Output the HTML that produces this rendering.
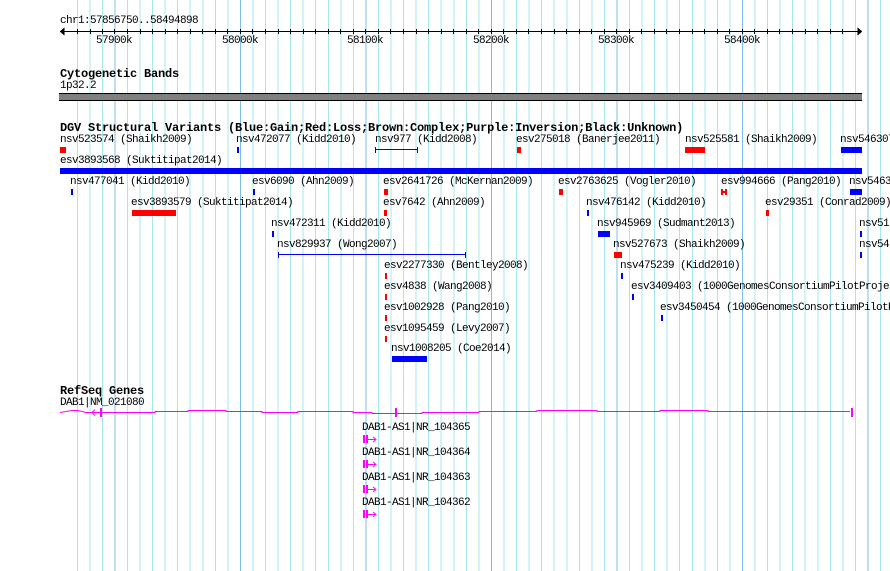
<!DOCTYPE html>
<html><head><meta charset="utf-8"><style>
html,body{margin:0;padding:0;}
body{width:890px;height:571px;position:relative;overflow:hidden;background:#fff;font-family:"Liberation Mono","DejaVu Sans Mono",monospace;}
.grid{position:absolute;left:70px;top:0;width:820px;height:571px;
background-image:repeating-linear-gradient(90deg,transparent 0,transparent 44.3px,#7fbfe4 44.3px,#7fbfe4 45.3px,transparent 45.3px,transparent 125.5px),
repeating-linear-gradient(90deg,transparent 0,transparent 6.8px,#a9e7ef 6.8px,#a9e7ef 7.8px,transparent 7.8px,transparent 12.55px);}
.t{position:absolute;font-size:11px;letter-spacing:-0.6px;line-height:10px;color:#000;white-space:pre;}
.b{position:absolute;font-size:12px;letter-spacing:-0.2px;line-height:12px;font-weight:bold;white-space:pre;}
.r{position:absolute;background:#f00;}
.u{position:absolute;background:#00f;}
.k{position:absolute;background:#000;}
</style></head><body>
<div class="grid"></div>

<div class="t" style="left:60px;top:16px">chr1:57856750..58494898</div>
<div class="k" style="left:61px;top:31px;width:800px;height:1px"></div>
<svg style="position:absolute;left:0;top:0" width="890" height="60">
<g stroke="#000" stroke-width="1">
<path d="M64.5 28 L60.5 31.5 L64.5 35 M857.5 28 L861.5 31.5 L857.5 35"/>
</g>
<g stroke="#000">
<path d="M77.5 29v5M90.5 29v5M102.5 29v5M114.5 29v5M127.5 29v5M140.5 29v5M152.5 29v5M165.5 29v5M177.5 29v5M190.5 29v5M202.5 29v5M215.5 29v5M227.5 29v5M240.5 29v5M252.5 29v5M265.5 29v5M278.5 29v5M290.5 29v5M303.5 29v5M315.5 29v5M328.5 29v5M340.5 29v5M353.5 29v5M365.5 29v5M378.5 29v5M390.5 29v5M403.5 29v5M416.5 29v5M428.5 29v5M441.5 29v5M453.5 29v5M466.5 29v5M478.5 29v5M491.5 29v5M503.5 29v5M516.5 29v5M528.5 29v5M541.5 29v5M554.5 29v5M566.5 29v5M579.5 29v5M591.5 29v5M604.5 29v5M616.5 29v5M629.5 29v5M641.5 29v5M654.5 29v5M666.5 29v5M679.5 29v5M692.5 29v5M704.5 29v5M717.5 29v5M729.5 29v5M742.5 29v5M754.5 29v5M767.5 29v5M779.5 29v5M792.5 29v5M805.5 29v5M817.5 29v5M830.5 29v5M842.5 29v5"/>
</g>
</svg>
<div class="t" style="left:96px;top:36px">57900k</div>
<div class="t" style="left:222px;top:36px">58000k</div>
<div class="t" style="left:347px;top:36px">58100k</div>
<div class="t" style="left:473px;top:36px">58200k</div>
<div class="t" style="left:598px;top:36px">58300k</div>
<div class="t" style="left:724px;top:36px">58400k</div>

<div class="b" style="left:60px;top:68px">Cytogenetic Bands</div>
<div class="t" style="left:60px;top:81px">1p32.2</div>
<div class="k" style="left:59px;top:93px;width:803px;height:8px"></div>
<div style="position:absolute;left:59px;top:94px;width:803px;height:6px;background:#808080"></div>

<div class="b" style="left:60px;top:122px">DGV Structural Variants (Blue:Gain;Red:Loss;Brown:Complex;Purple:Inversion;Black:Unknown)</div>

<div class="t" style="left:60px;top:135px">nsv523574 (Shaikh2009)</div>
<div class="t" style="left:236px;top:135px">nsv472077 (Kidd2010)</div>
<div class="t" style="left:375px;top:135px">nsv977 (Kidd2008)</div>
<div class="t" style="left:516px;top:135px">esv275018 (Banerjee2011)</div>
<div class="t" style="left:685px;top:135px">nsv525581 (Shaikh2009)</div>
<div class="t" style="left:840px;top:135px">nsv546307</div>
<div class="r" style="left:60px;top:147px;width:6px;height:6px"></div>
<div class="u" style="left:237px;top:147px;width:2px;height:6px"></div>
<div class="u" style="left:376px;top:149px;width:42px;height:1px"></div>
<div class="u" style="left:375px;top:147px;width:1px;height:6px"></div>
<div class="u" style="left:417px;top:147px;width:1px;height:6px"></div>
<div class="r" style="left:517px;top:147px;width:4px;height:6px"></div>
<div class="r" style="left:685px;top:147px;width:20px;height:6px"></div>
<div class="u" style="left:841px;top:147px;width:21px;height:6px"></div>

<div class="t" style="left:60px;top:156px">esv3893568 (Suktitipat2014)</div>
<div class="u" style="left:60px;top:168px;width:802px;height:6px"></div>

<div class="t" style="left:70px;top:177px">nsv477041 (Kidd2010)</div>
<div class="t" style="left:252px;top:177px">esv6090 (Ahn2009)</div>
<div class="t" style="left:383px;top:177px">esv2641726 (McKernan2009)</div>
<div class="t" style="left:558px;top:177px">esv2763625 (Vogler2010)</div>
<div class="t" style="left:721px;top:177px">esv994666 (Pang2010)</div>
<div class="t" style="left:849px;top:177px">nsv5463</div>
<div class="u" style="left:71px;top:189px;width:2px;height:6px"></div>
<div class="u" style="left:253px;top:189px;width:2px;height:6px"></div>
<div class="r" style="left:384px;top:189px;width:4px;height:6px"></div>
<div class="r" style="left:559px;top:189px;width:4px;height:6px"></div>
<div class="r" style="left:721px;top:189px;width:2px;height:6px"></div>
<div class="r" style="left:725px;top:189px;width:2px;height:6px"></div>
<div class="r" style="left:721px;top:191px;width:6px;height:2px"></div>
<div class="u" style="left:850px;top:189px;width:12px;height:6px"></div>

<div class="t" style="left:131px;top:198px">esv3893579 (Suktitipat2014)</div>
<div class="t" style="left:383px;top:198px">esv7642 (Ahn2009)</div>
<div class="t" style="left:586px;top:198px">nsv476142 (Kidd2010)</div>
<div class="t" style="left:765px;top:198px">esv29351 (Conrad2009)</div>
<div class="r" style="left:132px;top:210px;width:44px;height:6px"></div>
<div class="r" style="left:384px;top:210px;width:3px;height:6px"></div>
<div class="u" style="left:587px;top:210px;width:2px;height:6px"></div>
<div class="r" style="left:766px;top:210px;width:3px;height:6px"></div>

<div class="t" style="left:271px;top:219px">nsv472311 (Kidd2010)</div>
<div class="t" style="left:597px;top:219px">nsv945969 (Sudmant2013)</div>
<div class="t" style="left:859px;top:219px">nsv51</div>
<div class="u" style="left:272px;top:231px;width:2px;height:6px"></div>
<div class="u" style="left:598px;top:231px;width:12px;height:6px"></div>
<div class="u" style="left:860px;top:231px;width:2px;height:6px"></div>

<div class="t" style="left:277px;top:240px">nsv829937 (Wong2007)</div>
<div class="t" style="left:613px;top:240px">nsv527673 (Shaikh2009)</div>
<div class="t" style="left:859px;top:240px">nsv54</div>
<div class="u" style="left:278px;top:254px;width:188px;height:1px"></div>
<div class="u" style="left:278px;top:252px;width:1px;height:6px"></div>
<div class="u" style="left:465px;top:252px;width:1px;height:6px"></div>
<div class="r" style="left:614px;top:252px;width:8px;height:6px"></div>
<div class="u" style="left:860px;top:252px;width:2px;height:6px"></div>

<div class="t" style="left:384px;top:261px">esv2277330 (Bentley2008)</div>
<div class="t" style="left:620px;top:261px">nsv475239 (Kidd2010)</div>
<div class="r" style="left:385px;top:273px;width:2px;height:6px"></div>
<div class="u" style="left:621px;top:273px;width:2px;height:6px"></div>

<div class="t" style="left:384px;top:282px">esv4838 (Wang2008)</div>
<div class="t" style="left:631px;top:282px">esv3409403 (1000GenomesConsortiumPilotProje</div>
<div class="r" style="left:385px;top:294px;width:2px;height:6px"></div>
<div class="u" style="left:632px;top:294px;width:2px;height:6px"></div>

<div class="t" style="left:384px;top:303px">esv1002928 (Pang2010)</div>
<div class="t" style="left:660px;top:303px">esv3450454 (1000GenomesConsortiumPilotP</div>
<div class="r" style="left:385px;top:315px;width:2px;height:6px"></div>
<div class="u" style="left:661px;top:315px;width:2px;height:6px"></div>

<div class="t" style="left:384px;top:324px">esv1095459 (Levy2007)</div>
<div class="r" style="left:385px;top:336px;width:2px;height:6px"></div>

<div class="t" style="left:391px;top:344px">nsv1008205 (Coe2014)</div>
<div class="u" style="left:392px;top:356px;width:35px;height:6px"></div>

<div class="b" style="left:60px;top:385px">RefSeq Genes</div>
<div class="t" style="left:60px;top:398px">DAB1|NM_021080</div>
<svg style="position:absolute;left:0;top:400px" width="890" height="30">
<g stroke="#f0f" fill="none" stroke-width="1">
<path d="M60 12.5 L72 10.5 L78 10.5 L86 12.5 L155 12.5 L155 11.5 L188 11.5 L188 10.5 L226 10.5 L226 11.5 L262 11.5 L262 12.5 L298 12.5 L298 11.5 L353 11.5 L353 12.5 L372 12.5 L372 13.5 L422 13.5 L422 12.5 L479 12.5 L479 11.5 L537 11.5 L537 10.5 L597 10.5 L597 11.5 L660 11.5 L660 10.5 L708 10.5 L708 11.5 L850 11.5"/>
<path d="M95 9.5 L92 12.5 L95 15.5"/>
</g>
<rect x="100" y="8" width="2" height="9" fill="#f0f"/>
<rect x="395" y="8" width="2" height="9" fill="#f0f"/>
<rect x="851" y="8" width="2" height="9" fill="#f0f"/>
</svg>

<div class="t" style="left:362px;top:423px">DAB1-AS1|NR_104365</div>
<div class="t" style="left:362px;top:448px">DAB1-AS1|NR_104364</div>
<div class="t" style="left:362px;top:473px">DAB1-AS1|NR_104363</div>
<div class="t" style="left:362px;top:498px">DAB1-AS1|NR_104362</div>
<svg style="position:absolute;left:360px;top:434px" width="20" height="90">
<g fill="#f0f"><rect x="3" y="1" width="2" height="8"/><rect x="6" y="1" width="2" height="8"/>
<rect x="3" y="26" width="2" height="8"/><rect x="6" y="26" width="2" height="8"/>
<rect x="3" y="51" width="2" height="8"/><rect x="6" y="51" width="2" height="8"/>
<rect x="3" y="76" width="2" height="8"/><rect x="6" y="76" width="2" height="8"/></g>
<g stroke="#f0f" fill="none"><path d="M8 5.5H15M13 3l3 2.5-3 2.5M8 30.5H15M13 28l3 2.5-3 2.5M8 55.5H15M13 53l3 2.5-3 2.5M8 80.5H15M13 78l3 2.5-3 2.5"/></g>
</svg>
</body></html>
